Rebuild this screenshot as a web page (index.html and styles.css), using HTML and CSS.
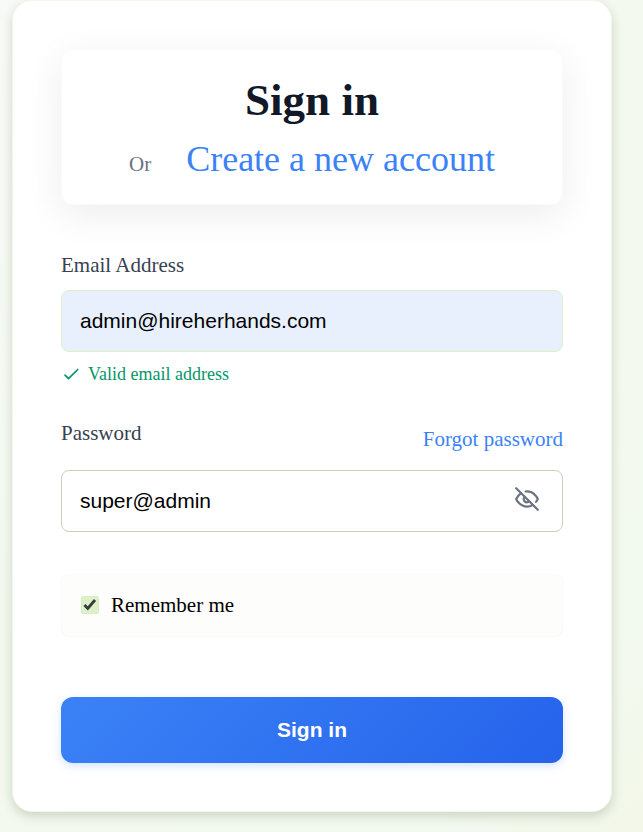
FILE: index.html
```html
<!DOCTYPE html>
<html lang="en">
<head>
<meta charset="utf-8">
<title>Sign in</title>
<link rel="stylesheet" href="styles.css">
</head>
<body>
<main class="card">
  <header class="intro">
    <h1 class="title">Sign in</h1>
    <p class="switch"><span class="or">Or</span><a class="create">Create a new account</a></p>
  </header>
  <form class="form">
    <label class="label" for="email">Email Address</label>
    <input class="input email" id="email" type="text" value="admin@hireherhands.com">
    <p class="valid">
      <svg class="check" viewBox="0 0 20 20" fill="none" stroke="currentColor" stroke-width="1.7" stroke-linecap="round" stroke-linejoin="round"><path d="M4 11.2L7.5 14.7L16.7 5.5"/></svg>
      <span>Valid email address</span>
    </p>
    <div class="password-row">
      <label class="label" for="password">Password</label>
      <a class="forgot">Forgot password</a>
    </div>
    <div class="input password">
      <input class="bare" id="password" type="text" value="super@admin">
      <svg class="eye" viewBox="0 0 24 24" fill="none" stroke="currentColor" stroke-width="2" stroke-linecap="round" stroke-linejoin="round"><path d="M9.88 9.88a3 3 0 1 0 4.24 4.24"/><path d="M10.73 5.08A10.43 10.43 0 0 1 12 5c7 0 10 7 10 7a13.16 13.16 0 0 1-1.67 2.68"/><path d="M6.61 6.61A13.526 13.526 0 0 0 2 12s3 7 10 7a9.74 9.74 0 0 0 5.39-1.61"/><path d="M2 2L22 22"/></svg>
    </div>
    <div class="remember">
      <svg class="box" viewBox="0 0 18 18"><rect x=".5" y=".5" width="17" height="17" rx="1.5" fill="#dcf1c9" stroke="#d8edc5"/><path d="M3.5 9L6.8 12.5L14 4" fill="none" stroke="#3b3b3b" stroke-width="2.8"/></svg>
      <span>Remember me</span>
    </div>
    <button class="submit" type="button">Sign in</button>
  </form>
</main>
</body>
</html>
```
FILE: styles.css
```css
* { box-sizing: border-box; }
body {
  margin: 0;
  height: 832px;
  padding-left: 12px;
  overflow: hidden;
  background: linear-gradient(135deg, #f8faf7 0%, #f3f9ef 45%, #f2f9ef 85%, #f2f7e8 100%);
  font-family: "Liberation Serif", serif;
  font-size: 21px;
}
h1, p { margin: 0; }
.card {
  width: 600px;
  height: 812px;
  padding: 48px;
  background: #fff;
  border: 1px solid #f1f7ea;
  border-radius: 20px;
  box-shadow: 0 4px 11px rgba(40, 60, 20, .19);
}
.intro {
  height: 156px;
  padding-top: 23px;
  border: 1px solid #fafaf7;
  border-radius: 12px;
  box-shadow: 0 10px 38px rgba(0, 0, 0, .075);
  text-align: center;
}
.title { font-size: 45px; line-height: 54px; color: #111827; }
.switch {
  display: flex;
  justify-content: center;
  align-items: baseline;
  gap: 35px;
  margin-top: 11px;
  line-height: 42px;
}
.or { color: #6b7280; }
.create { font-size: 36px; color: #3b82f6; }
.form { display: flex; flex-direction: column; }
.label { color: #374151; line-height: 24px; }
.form > .label { margin-top: 48px; }
.input {
  height: 62px;
  padding: 0 18px;
  border: 1px solid #cdd0b8;
  border-radius: 8px;
  font: 21px "Liberation Sans", sans-serif;
  color: #000;
}
.email { margin-top: 13px; background: #e8f0fe; border-color: #dcf1c9; }
.valid {
  display: flex;
  align-items: center;
  gap: 7px;
  height: 24px;
  margin-top: 10px;
  font-size: 18px;
  color: #059669;
}
.check { width: 20px; height: 20px; }
.password-row { display: flex; justify-content: space-between; margin-top: 35px; }
.forgot { margin-top: 6px; line-height: 24px; color: #3b82f6; }
.password { display: flex; align-items: center; justify-content: space-between; margin-top: 19px; }
.bare { width: 320px; padding: 0; border: 0; outline: 0; background: none; font: inherit; color: inherit; }
.eye { width: 26px; height: 26px; margin: 0 4px 5px 0; color: #6b7280; }
.remember {
  display: flex;
  align-items: center;
  gap: 12px;
  height: 63px;
  margin-top: 42px;
  padding-left: 19px;
  background: #fdfdfb;
  border: 1px solid #f9faf5;
  border-radius: 8px;
}
.box { width: 18px; height: 18px; margin-bottom: 1px; }
.submit {
  height: 66px;
  margin-top: 60px;
  border: 0;
  border-radius: 12px;
  background: linear-gradient(135deg, #3b82f6, #2563eb);
  box-shadow: 0 3px 8px rgba(59, 130, 246, .22);
  font: bold 21px "Liberation Sans", sans-serif;
  color: #fff;
}
```
